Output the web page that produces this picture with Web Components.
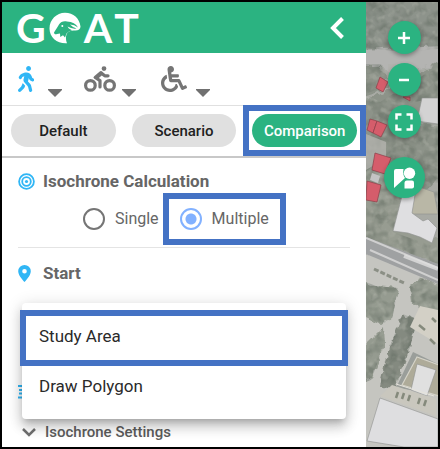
<!DOCTYPE html>
<html lang="en">
<head>
<meta charset="utf-8">
<meta name="viewport" content="width=device-width, initial-scale=1">
<title>GOAT – Isochrone comparison</title>
<style>
  body { margin: 0; font-family: Roboto, "Liberation Sans", sans-serif; color: #666; background: #fff; }
</style>
</head>
<body>
<goat-app></goat-app>
<script>
const define = (name, html, setup) => customElements.define(name, class extends HTMLElement {
  connectedCallback() {
    if (this.shadowRoot) return;
    const t = document.createElement('template');
    t.innerHTML = html;
    this.attachShadow({ mode: 'open' }).append(t.content.cloneNode(true));
    if (setup) setup(this, this.shadowRoot);
  }
});

define('goat-header', `
<style>
  :host { display: flex; align-items: center; justify-content: space-between; height: 51px; padding: 0 22px 0 14px; background: #2bb381; color: #fff; }
  .brand { display: flex; align-items: center; gap: 2px; font: 700 41px/50px Lato, sans-serif; }
  .brand svg { width: 34px; height: 32px; }
  button { border: 0; background: none; padding: 0; color: inherit; display: flex; }
</style>
<div class="brand"><span>G</span>
<svg viewBox="0 0 34 32" aria-label="goat"><path fill="#fff" d="M17 .8C25.500 .8 31.500 6.500 32.500 14.500C32.500 17.500 30 18.800 26.500 18.500C22.500 18.300 19.500 19.500 18.500 22.500C17.600 25 17.800 28 19 31.300C9.500 32 1.500 25.500 1.500 16.500C1.500 7.800 8.500 .8 17 .8Z"/><path fill="#2bb381" d="M19 9.500C15 8.800 13 10 11 12.500L9.500 15L6 20.500C6 22 7.500 22.800 9 22L12 21.500L12.300 25L15 23.200L17 25.500L18.500 21.500L21 19.500L24 18.300Q20 16.500 19.500 14.500Q24 17.200 28.500 16.500Q24.500 15.300 22 12.500Q26.500 12.500 30 15.500Q27 10 19 9.500Z"/><circle cx="14.300" cy="14" r="1" fill="#fff"/></svg>
<span>A</span><span>T</span></div>
<button aria-label="Collapse panel"><svg width="14" height="22" viewBox="0 0 14 22" fill="none" stroke="#fff" stroke-width="4"><path d="M12.500 1.500L3 11L12.500 20.500"/></svg></button>
`);

define('travel-mode', `
<style>
  :host { display: block; color: #757575; }
  :host([active]) { color: #30b6f5; }
  button { display: grid; grid-template-columns: 32px 14px; gap: 6px; align-items: end; border: 0; background: none; padding: 0; color: inherit; }
  .icon { height: 26px; display: flex; justify-content: center; }
  .icon svg { height: 26px; fill: currentColor; }
  .caret { width: 14px; height: 8px; fill: #707070; margin-bottom: -5px; }
</style>
<button><span class="icon"></span><svg class="caret" viewBox="0 0 14 8"><path d="M0 0H14V1L7 8L0 1Z"/></svg></button>`, (host, root) => {
  const icons = {
    Walking: [320, 'M208 96c26.500 0 48-21.500 48-48S234.500 0 208 0s-48 21.500-48 48 21.500 48 48 48zm94.500 149.100l-23.300-11.800-9.700-29.400c-14.700-44.600-55.700-75.800-102.200-75.900-36-.1-55.900 10.100-93.300 25.200-21.600 8.700-39.300 25.200-49.700 46.200L17.600 213c-7.800 15.800-1.500 35 14.200 42.900 15.600 7.900 34.600 1.500 42.500-14.300L81 228c3.500-7 9.300-12.500 16.500-15.400l26.800-10.800-15.200 60.700c-5.200 20.800.4 42.900 14.900 58.800l59.900 65.400c7.200 7.900 12.300 17.400 14.900 27.700l18.300 73.300c4.300 17.100 21.700 27.600 38.800 23.300 17.100-4.300 27.600-21.700 23.300-38.800l-22.200-89c-2.600-10.300-7.700-19.900-14.900-27.700l-45.500-49.700 17.200-68.700 5.500 16.500c5.300 16.100 16.700 29.400 31.700 37l23.300 11.800c15.600 7.900 34.600 1.500 42.500-14.300 7.700-15.700 1.400-35.100-14.300-43zM73.600 385.800c-3.200 8.100-8 15.400-14.200 21.500l-50 50.100c-12.500 12.500-12.500 32.800 0 45.300s32.700 12.500 45.200 0l59.400-59.400c6.100-6.100 10.900-13.400 14.200-21.500l13.500-33.800c-55.300-60.300-38.700-41.800-47.400-53.700l-20.700 51.500z'],
    Cycling: [640, 'M400 96a48 48 0 1 0-48-48 48 48 0 0 0 48 48zm-4 121a31.900 31.900 0 0 0 20 7h64a32 32 0 0 0 0-64h-52.780L356 103a31.940 31.940 0 0 0-40.810.68l-112 96a32 32 0 0 0 3.080 50.920L288 305.120V416a32 32 0 0 0 64 0V288a32 32 0 0 0-14.250-26.620l-41.360-27.570 58.250-49.920zm116 39a128 128 0 1 0 128 128 128 128 0 0 0-128-128zm0 192a64 64 0 1 1 64-64 64 64 0 0 1-64 64zM128 256a128 128 0 1 0 128 128 128 128 0 0 0-128-128zm0 192a64 64 0 1 1 64-64 64 64 0 0 1-64 64z'],
    Wheelchair: [512, 'M496.101 385.669l14.227 28.663c3.929 7.915.697 17.516-7.218 21.445l-65.465 32.886c-16.049 7.967-35.556 1.194-43.189-15.055L331.679 320H192c-15.925 0-29.426-11.710-31.679-27.475C126.433 55.308 128.380 70.044 128 64c0-36.358 30.318-65.635 67.052-63.929 33.271 1.545 60.048 28.905 60.925 62.201.868 32.933-23.152 60.423-54.608 65.039l4.670 32.690H336c8.837 0 16 7.163 16 16v32c0 8.837-7.163 16-16 16H215.182l4.572 32H352a32 32 0 0 1 28.962 18.392L438.477 396.800l36.178-18.349c7.915-3.929 17.517-.697 21.446 7.218zM311.358 352h-24.506c-7.788 54.204-54.528 96-110.852 96-61.757 0-112-50.243-112-112 0-41.505 22.694-77.809 56.324-97.156-3.712-25.965-6.844-47.860-9.488-66.333C45.956 198.464 0 261.963 0 336c0 97.047 78.953 176 176 176 71.870 0 133.806-43.308 161.110-105.192L311.358 352z']
  };
  const mode = host.getAttribute('mode');
  const [w, d] = icons[mode];
  root.querySelector('button').setAttribute('aria-label', mode);
  root.querySelector('.icon').innerHTML = `<svg viewBox="0 0 ${w} 512"><path d="${d}"/></svg>`;
});

define('pill-button', `
<style>
  :host { display: block; flex: 1; }
  :host([marked]) { outline: 6px solid #4472c4; outline-offset: 3px; position: relative; z-index: 3; }
  button { display: block; width: 100%; height: 33px; border: 0; border-radius: 17px; padding: 0; background: #e0e0e0; color: #212121; font: 500 15px/34px Roboto, sans-serif; }
  :host([marked]) button { background: #2bb381; color: #fff; }
</style>
<button><slot></slot></button>`);

define('section-title', `
<style>
  :host { display: grid; grid-template-columns: 17px 1fr; gap: 8px; align-items: center; }
  h2 { margin: 0; font: 700 17px/22px Roboto, sans-serif; color: #666; }
  ::slotted(svg) { display: block; }
</style>
<slot name="icon"></slot><h2><slot></slot></h2>`);

define('radio-option', `
<style>
  :host { display: block; }
  label { display: flex; align-items: center; gap: 10px; height: 40px; font-size: 16px; line-height: 22px; color: #666; }
  input { appearance: none; box-sizing: border-box; width: 22px; height: 22px; margin: 0; border: 2px solid #757575; border-radius: 50%; }
  input:checked { border-color: #82b1ff; background: radial-gradient(circle, #82b1ff 5px, transparent 6px); }
  :host([marked]) label { padding: 0 11px; outline: 6px solid #4472c4; }
</style>
<label><input type="radio" name="calc"><span><slot></slot></span></label>`, (host, root) => {
  root.querySelector('input').checked = host.hasAttribute('checked');
});

define('start-menu', `
<style>
  :host { display: block; position: absolute; z-index: 2; inset: 0 4px auto 4px; padding: 8px 0; background: #fff; border-radius: 4px; box-shadow: 0 5px 6px -3px #0003, 0 8px 12px 1px #00000024, 0 3px 16px 2px #0000001f; }
</style>
<slot></slot>`);

define('menu-option', `
<style>
  :host { display: block; position: relative; }
  button { display: block; width: 100%; height: 50px; border: 0; padding: 0 17px; background: none; text-align: left; color: #2a2a2a; font: 400 17px/50px Roboto, sans-serif; }
  :host([marked])::after { content: ""; position: absolute; inset: -1px -2px -5px -2px; border: 6px solid #4472c4; pointer-events: none; }
</style>
<button role="menuitem"><slot></slot></button>`);

define('settings-toggle', `
<style>
  :host { display: block; margin: 20px 4px 0; }
  button { display: flex; align-items: center; gap: 9px; border: 0; padding: 0; background: none; color: #5c5c5c; font: 500 15px/20px Roboto, sans-serif; }
</style>
<button aria-expanded="false"><svg width="14" height="9" viewBox="0 0 14 9" fill="none" stroke="#707070" stroke-width="2.500"><path d="M1 1L7 7L13 1"/></svg><slot></slot></button>`);

define('map-button', `
<style>
  :host { display: block; }
  button { display: grid; place-items: center; width: 33px; height: 33px; border: 0; border-radius: 50%; padding: 0; background: #2bb381; box-shadow: 0 2px 4px #0005; }
  :host([large]) button { width: 41px; height: 41px; }
  ::slotted(svg) { display: block; fill: none; stroke: #fff; }
</style>
<button><slot></slot></button>`, (host, root) => root.querySelector('button').setAttribute('aria-label', host.getAttribute('label')));

define('aerial-map', `
<style>
  :host { display: block; position: relative; overflow: hidden; background: #a6a8a2; }
  .photo { position: absolute; inset: 0; width: 100%; height: 100%; }
  .controls { position: absolute; inset: 19px 0 auto 4px; display: grid; justify-items: center; gap: 9px; }
  map-button[large] { margin-top: 10px; }
</style>
<svg class="photo" viewBox="0 0 72 445" preserveAspectRatio="xMidYMid slice" aria-hidden="true">
  <defs>
    <filter id="grain" x="0" y="0" width="100%" height="100%" color-interpolation-filters="sRGB"><feTurbulence type="fractalNoise" baseFrequency=".1" numOctaves="2" seed="8"/><feColorMatrix values="0 0 0 0 .36  0 0 0 0 .4  0 0 0 0 .36  3 0 0 0 -1.200"/></filter>
    <filter id="light" x="0" y="0" width="100%" height="100%" color-interpolation-filters="sRGB"><feTurbulence type="fractalNoise" baseFrequency=".14" numOctaves="2" seed="21"/><feColorMatrix values="0 0 0 0 .74  0 0 0 0 .75  0 0 0 0 .71  0 4 0 0 -2"/></filter>
    <filter id="rough" x="-10%" y="-10%" width="120%" height="120%"><feTurbulence type="fractalNoise" baseFrequency=".14" numOctaves="2" seed="3" result="n"/><feDisplacementMap in="SourceGraphic" in2="n" scale="8" xChannelSelector="R" yChannelSelector="G"/><feGaussianBlur stdDeviation=".6"/></filter>
    <clipPath id="trees"><path d="M0 0H72V47L38 50L0 46ZM0 62L15 62L25 82L0 92ZM0 92L14 100L72 64V95L40 102V120H72V205L60 182L44 188L34 200L27 230L72 246V262L20 243L0 236ZM0 280L10 284L32 286L26 318L14 322L0 314ZM44 284L58 276L72 282V306L57 306L46 300ZM0 348L17 326L18 344L5 378L0 380ZM37 312L51 318L44 345L29 388L14 384L24 344Z"/></clipPath>
  </defs>
  <path fill="#a8aaa4" d="M0 0H72V445H0Z"/>
  <g filter="url(#rough)">
    <path fill="#8d938b" d="M-5 -5H77V48H-5Z"/>
    <path fill="#b4b4b2" d="M-5 48L77 44V62L30 70L-5 62Z"/>
    <path fill="#8d9389" d="M-5 64L14 64L24 86L-5 95ZM20 90L77 58V98L40 120L77 125V170L50 200L-5 190V100Z"/>
    <path fill="#979c91" d="M-5 170L30 165L35 210L77 240V262L-5 236Z"/>
    <path fill="#c5c5c0" d="M-5 250L77 275V450H-5Z"/>
    <path fill="#959b90" d="M-5 280L10 284L32 286L26 318L14 322L-5 314ZM44 284L58 276L77 282V308L57 308L46 300ZM-5 348L17 326L18 344L5 378L-5 380Z"/>
    <path fill="#848a80" d="M37 312L51 318L44 345L29 388L14 384L24 344Z"/>
  </g>
  <g clip-path="url(#trees)"><path filter="url(#grain)" opacity=".45" d="M0 0H72V445H0Z"/><path filter="url(#light)" opacity=".3" d="M0 0H72V445H0Z"/></g>
  <path fill="#b2b1ad" d="M0 132L20 140L20 156L0 168ZM22 62L42 62L34 72L22 70Z" opacity=".8"/>
  <path fill="#9fa1a2" d="M0 235L72 262V282L0 252Z"/>
  <path d="M0 236L72 266M4 248L72 278" stroke="#d0d0d0" stroke-width="2"/>
  <path d="M38 254L72 267" stroke="#e0e0e0" stroke-width="4" opacity=".8"/>
  <path d="M8 267L38 281" stroke="#8b8f85" stroke-width="3" stroke-dasharray="5 2"/>
  <g fill="#d3d3d3" stroke="#8e908e" stroke-width=".6">
    <path d="M56 96H72V122L51 119Z"/>
    <path fill="#b9b7a6" d="M45 212L50 184L68 190L72 212Z"/>
    <path fill="#dfdfe1" d="M38 186H46L49 193L46 211L57 219L62 217L71 226L66 241L54 235L42 231L27 229Z"/>
    <path fill="#d3d0c6" stroke="none" d="M54 304L72 308V342L44 325Z"/>
    <path fill="#9a9e9a" stroke="none" d="M30 386L47 350L72 362V392Z"/>
    <path fill="#aeab99" stroke="#d5d3c8" stroke-width="1.200" d="M36 383L51 355L73 363V394Z"/><path fill="#e0e0e0" d="M51 362L70 368L61 394L45 388Z"/>
    <path fill="#c9c7be" stroke="none" d="M14 394L26 383L70 397V414Z"/>
    <path fill="#dedee0" d="M14 396L72 417V445H38L1 439Z"/>
  </g>
  <path d="M53 323l6 5M64 337l5 5M66 316l4 4M32 390l-2 6M38 391l-2 6M44 393l-2 6M54 396l-2 6M60 398l-2 6" stroke="#858a7c" stroke-width="2.500"/>
  <path d="M30 382L68 394" stroke="#e6e4dc" stroke-width="1"/>
  <g fill="#d55d6b" stroke="#8c3f49" stroke-width=".7">
    <path d="M14 75L22 80L17 90L10 86Z"/><path d="M4 117L11 119L7 131L1 128Z"/><path d="M11 119L21 123L15 135L7 131Z"/><path d="M9 151L25 156L19 172L6 168Z"/><path d="M1 179L15 183L11 200L0 198Z"/><path d="M37 95h7v4Z"/>
  </g>
  <path fill="#c4c4c4" d="M6 171L14 174L12 181L4 178Z"/>
</svg>
<div class="controls">
  <map-button label="Zoom in"><svg width="12" height="12" viewBox="0 0 12 12" stroke-width="2.500"><path d="M6 0V12M0 6H12"/></svg></map-button>
  <map-button label="Zoom out"><svg width="12" height="12" viewBox="0 0 12 12" stroke-width="2.500"><path d="M1 6H11"/></svg></map-button>
  <map-button label="Full screen"><svg width="18" height="18" viewBox="0 0 18 18" stroke-width="2.500"><path d="M1.500 6.500V1.500H6.500M11.500 1.500H16.500V6.500M16.500 11.500V16.500H11.500M6.500 16.500H1.500V11.500"/></svg></map-button>
  <map-button large label="Street view"><svg width="23" height="22" viewBox="0 0 23 22"><g fill="#fff" stroke="none"><path d="M3 2H10.500Q9.500 8 12 11L1 21V4Q1 2 3 2Z"/><circle cx="16.500" cy="6.200" r="5.700"/><path d="M11.500 16Q11.500 13.500 14 13.500H19Q21 13.500 21 15.500V19.500Q21 21.500 19 21.500H11.500Z"/></g></svg></map-button>
</div>`);

define('goat-app', `
<style>
  :host { display: grid; grid-template-columns: 91fr 18fr; box-sizing: border-box; min-height: 100vh; border: 2px solid #000; }
  aside { background: #fff; min-width: 0; }
  .modes { display: flex; gap: 22px; padding: 13px 8px; border-bottom: 1px solid #e0e0e0; }
  .pills { display: flex; gap: 16px; padding: 8px 9px 9px; border-bottom: 2px solid #c8c8c8; }
  .panel { padding: 12px 16px 5px; }
  .radios { display: flex; gap: 10px; padding: 7px 0 8px 65px; border-bottom: 1px solid #e4e4e4; margin-bottom: 14px; }
  .start { position: relative; min-height: 77px; margin-top: 19px; }
</style>
<aside>
  <goat-header></goat-header>
  <nav class="modes"><travel-mode mode="Walking" active></travel-mode><travel-mode mode="Cycling"></travel-mode><travel-mode mode="Wheelchair"></travel-mode></nav>
  <div class="pills"><pill-button>Default</pill-button><pill-button>Scenario</pill-button><pill-button marked>Comparison</pill-button></div>
  <div class="panel">
    <section-title><svg slot="icon" width="17" height="17" viewBox="0 0 17 17" fill="none" stroke="#30b6f5" stroke-width="1.800"><circle cx="8.500" cy="8.500" r="7.400"/><circle cx="8.500" cy="8.500" r="4.300"/><circle cx="8.500" cy="8.500" r="1.600" fill="#30b6f5" stroke="none"/></svg>Isochrone Calculation</section-title>
    <div class="radios"><radio-option>Single</radio-option><radio-option checked marked>Multiple</radio-option></div>
    <section-title><svg slot="icon" width="13" height="17" viewBox="0 0 13 17"><path fill="#30b6f5" fill-rule="evenodd" d="M6.500 0A6.300 6.300 0 0 0 .2 6.300C.2 11 6.500 17 6.500 17S12.800 11 12.800 6.300A6.300 6.300 0 0 0 6.500 0ZM6.500 4A2.300 2.300 0 1 1 6.500 8.600A2.300 2.300 0 0 1 6.500 4Z"/></svg>Start</section-title>
    <div class="start"><start-menu role="menu"><menu-option marked>Study Area</menu-option><menu-option>Draw Polygon</menu-option></start-menu></div>
    <section-title><svg slot="icon" width="17" height="22" viewBox="0 0 17 22" stroke="#30b6f5" stroke-width="2"><path d="M0 6H17M1 10H17M1 13.500H17M0 17.500H17"/></svg></section-title>
    <settings-toggle>Isochrone Settings</settings-toggle>
  </div>
</aside>
<aerial-map></aerial-map>`);
</script>
</body>
</html>
